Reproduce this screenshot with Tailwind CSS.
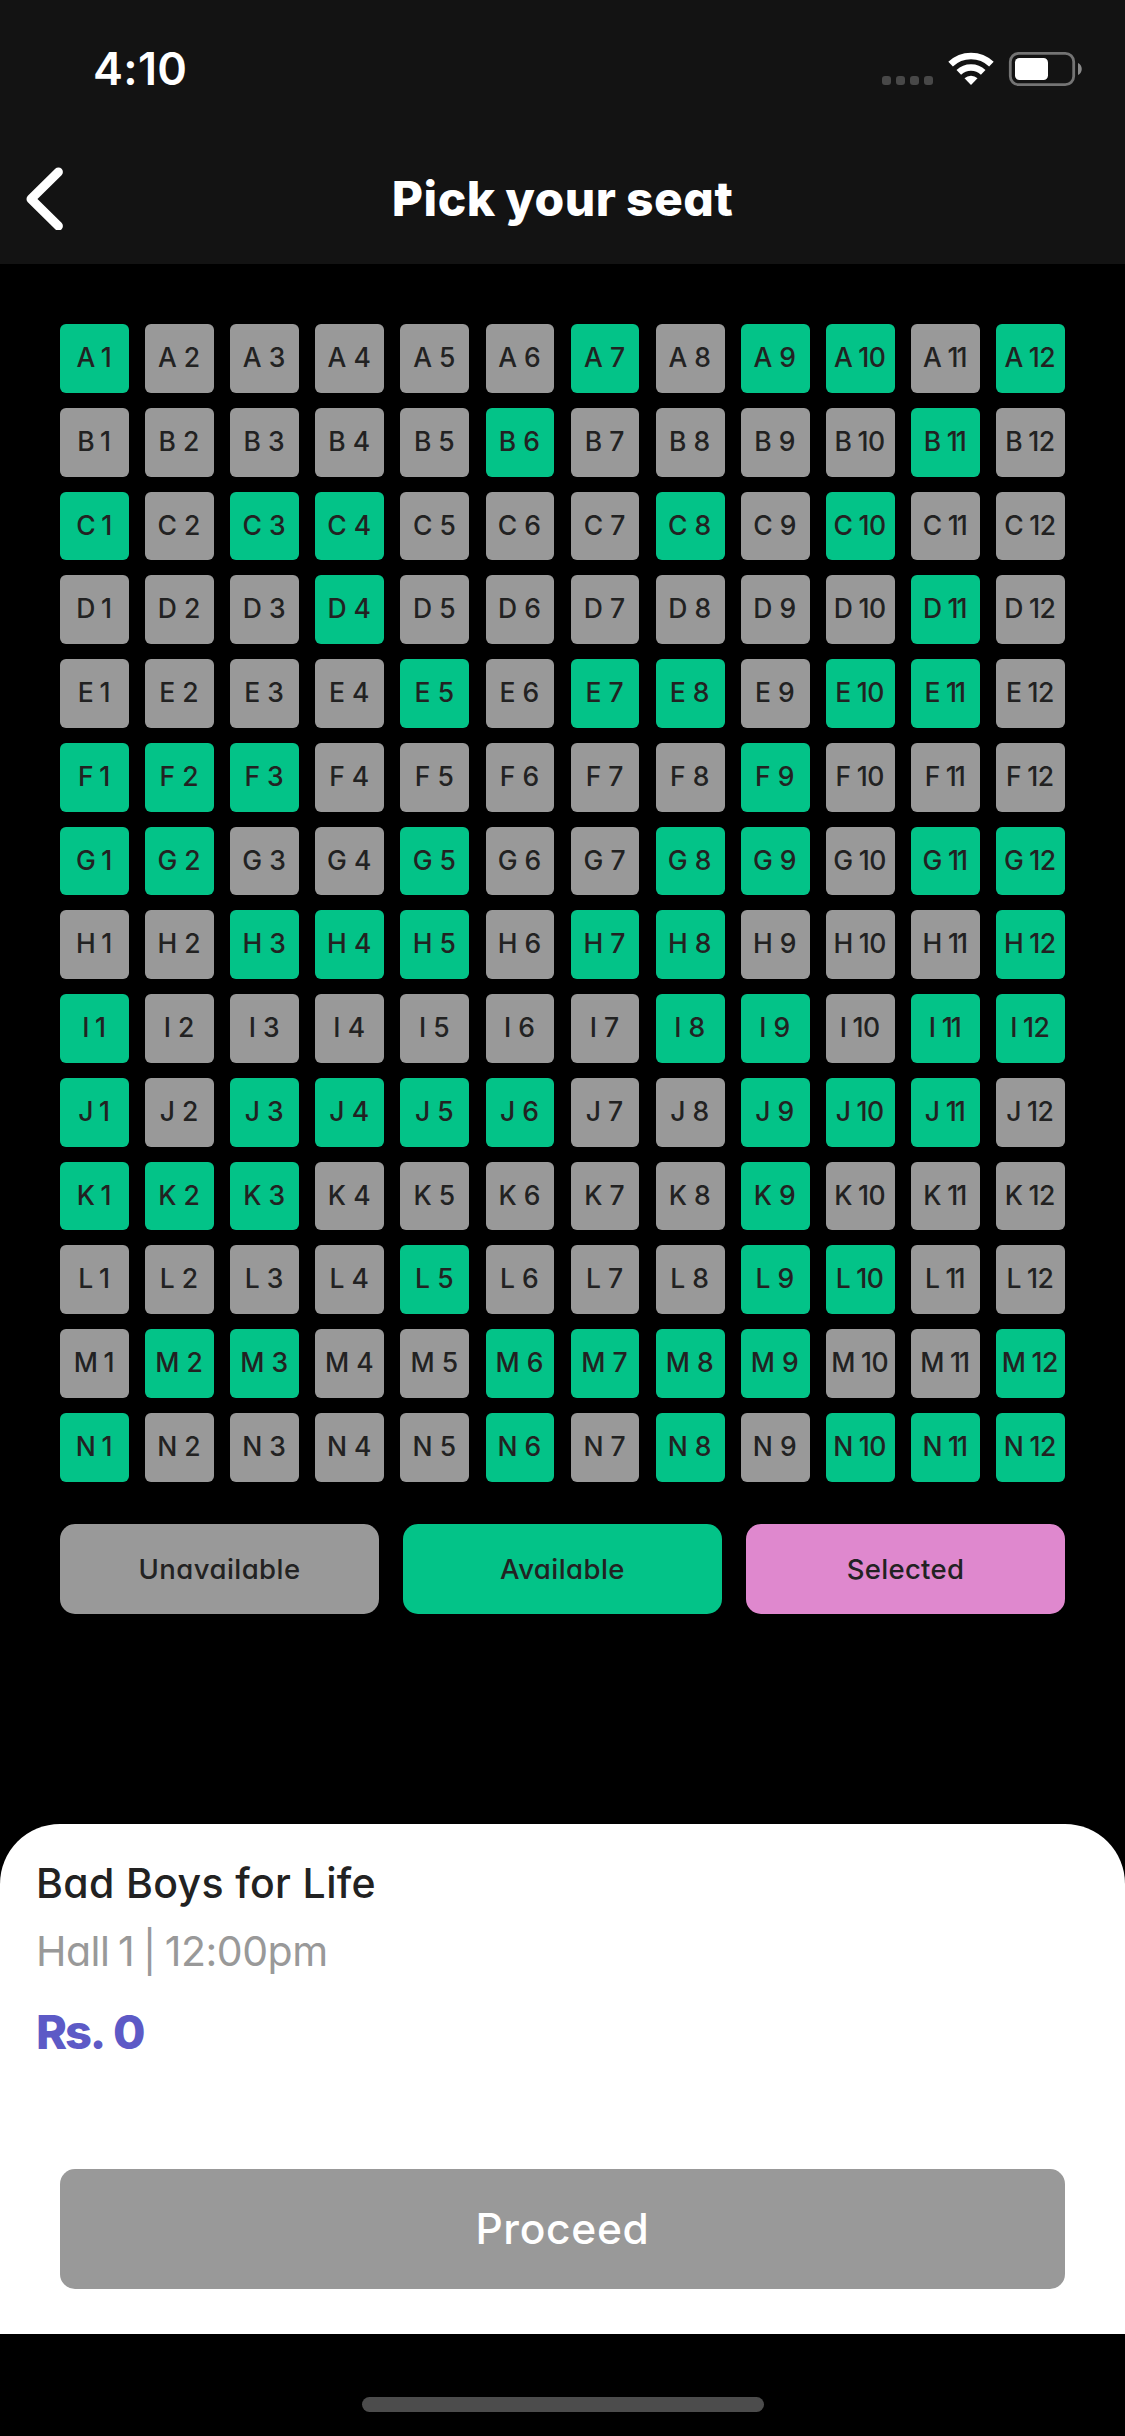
<!DOCTYPE html>
<html lang="en">
<head>
<meta charset="utf-8">
<title>Pick your seat</title>
<script src="https://cdn.jsdelivr.net/npm/@tailwindcss/browser@4"></script>
</head>
<body class="bg-black">
<div class="flex h-[2436px] w-[1125px] flex-col overflow-hidden bg-black font-['Inter',sans-serif] [font-feature-settings:'cv11']">
  <header class="h-[264px] shrink-0 bg-[#131313]">
    <div class="flex h-[138px] items-center justify-between pr-[43px] pl-[93px]">
      <span class="pb-0.5 text-[45px] font-semibold leading-none tracking-[0.300px] text-white">4:10</span>
      <svg class="h-[40px] w-[202px]" viewBox="880 49 202 40" fill="none">
        <g fill="#484848"><rect x="882" y="76" width="9" height="9" rx="3"/><rect x="896" y="76" width="9" height="9" rx="3"/><rect x="910" y="76" width="9" height="9" rx="3"/><rect x="924" y="76" width="9" height="9" rx="3"/></g>
        <g stroke="#fff" stroke-width="6.6"><path d="M950.6 64.2A29.5 29.5 0 0 1 991.4 64.2"/><path d="M958.8 72.4A17.6 17.6 0 0 1 983.2 72.4"/></g>
        <path d="M964.5 78.3A9.5 9.5 0 0 1 977.500 78.300L971 85Z" fill="#fff"/>
        <rect x="1010.300" y="53.300" width="63.400" height="31.400" rx="8.500" stroke="#747474" stroke-width="2.800"/>
        <rect x="1015" y="58" width="33" height="22" rx="4.500" fill="#fff"/>
        <path d="M1078 63C1083 65 1083 73 1078 75Z" fill="#8a8a8a"/>
      </svg>
    </div>
    <div class="grid h-[120px] grid-cols-[1fr_auto_1fr] items-center px-[25px]">
      <svg class="h-[64px] w-[40px]" viewBox="25 166 40 64" fill="none" stroke="#fff" stroke-width="9" stroke-linecap="round" stroke-linejoin="round"><path d="M58.400 172L31 199L58.400 226"/></svg>
      <h1 class="pt-0.5 text-[48px] font-extrabold leading-none tracking-[0.500px] [word-spacing:-1.500px] text-white">Pick your seat</h1>
    </div>
  </header>
  <main class="flex grow flex-col px-[60px] pt-[60px]">
    <div id="seats" class="grid grid-cols-[repeat(12,68.770px)] justify-between gap-y-[15px]"></div>
    <div class="mt-[42px] grid h-[90px] grid-cols-3 gap-6 text-[27.500px] font-medium tracking-[0.450px] text-[#222]">
      <div class="flex items-center justify-center rounded-[15px] bg-[#999] pt-px">Unavailable</div>
      <div class="flex items-center justify-center rounded-[15px] bg-[#03c388] pt-px">Available</div>
      <div class="flex items-center justify-center rounded-[15px] bg-[#df88ce] pt-px tracking-[0.300px]">Selected</div>
    </div>
  </main>
  <section class="flex h-[510px] shrink-0 flex-col rounded-t-[60px] bg-white px-9 pt-[29px]">
    <h2 class="h-[60px] text-[41px] font-medium leading-[60px] tracking-[0.350px] text-[#222]">Bad Boys for Life</h2>
    <p class="mt-2 h-[60px] text-[41px] font-normal leading-[60px] tracking-[-0.500px] [word-spacing:-1px] text-[#999]">Hall <span class="-mx-[1.500px]">1</span> | <span class="-ml-[1px]">1</span>2:00pm</p>
    <p class="mt-4 h-[70px] text-[47px] font-extrabold leading-[70px] tracking-[-2.200px] [word-spacing:3px] text-[#5d5ac6]">Rs. 0</p>
    <button class="mx-6 mt-auto mb-[45px] h-[120px] shrink-0 rounded-[15px] bg-[#999] text-[42.500px] font-medium tracking-[0.700px] text-white">Proceed</button>
  </section>
  <footer class="flex h-[102px] shrink-0 items-end justify-center pb-6"><div class="h-[15px] w-[402px] rounded-full bg-[#4c4c4c]"></div></footer>
</div>
<script>
  const available = {
    A: [1, 7, 9, 10, 12], B: [6, 11], C: [1, 3, 4, 8, 10], D: [4, 11], E: [5, 7, 8, 10, 11],
    F: [1, 2, 3, 9], G: [1, 2, 5, 8, 9, 11, 12], H: [3, 4, 5, 7, 8, 12], I: [1, 8, 9, 11, 12],
    J: [1, 3, 4, 5, 6, 9, 10, 11], K: [1, 2, 3, 9], L: [5, 9, 10], M: [2, 3, 6, 7, 8, 9, 12], N: [1, 6, 8, 10, 11, 12]
  };
  const seats = document.getElementById('seats');
  for (const [row, open] of Object.entries(available)) {
    for (let n = 1; n <= 12; n++) {
      const seat = document.createElement('div');
      seat.className = 'flex h-[68.770px] items-center justify-center rounded-[6px] pr-px pb-px text-[26.500px] font-medium whitespace-nowrap text-[#222] ' + (open.includes(n) ? 'bg-[#03c388]' : 'bg-[#999]');
      seat.innerHTML = '<span>' + row + ' ' + String(n).replace(/1/g, '<span class="-ml-[1.500px] -mr-[0.500px]">1</span>') + '</span>';
      seats.append(seat);
    }
  }
</script>
</body>
</html>
